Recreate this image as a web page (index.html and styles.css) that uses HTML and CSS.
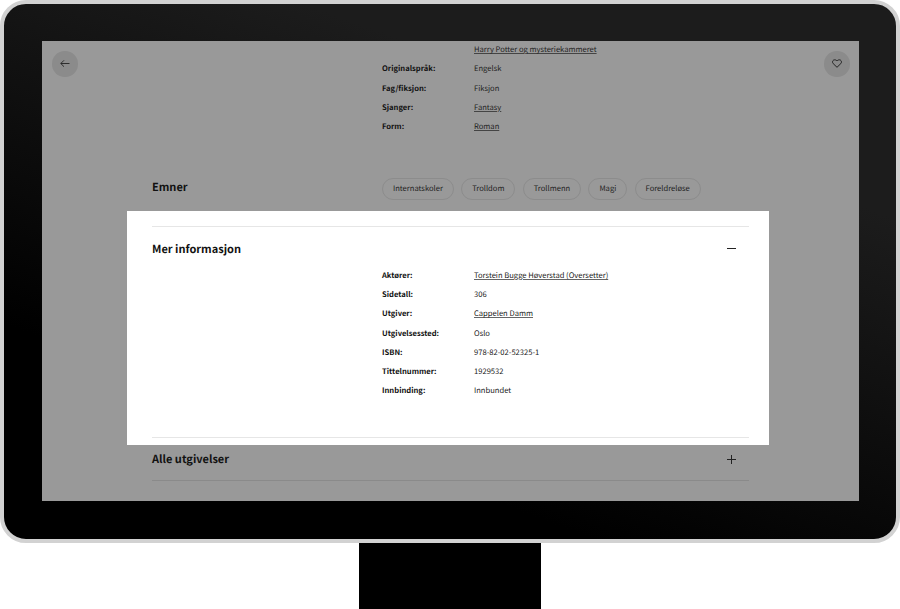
FILE: index.html
```html
<!DOCTYPE html>
<html lang="nb">
  <head>
    <meta charset="UTF-8" />
    <title>Mer informasjon</title>
    <link rel="stylesheet" href="styles.css">
  </head>
  <body>
    <div class="monitor">
      <div class="screen">
        <button class="round-btn back" aria-label="Tilbake">
          <svg width="10" height="9" viewBox="0 0 10 9"><path d="M9.500 4.500H.8M4 1.300.8 4.500 4 7.700" fill="none" stroke="#222" stroke-width=".9"/></svg>
        </button>
        <button class="round-btn fav" aria-label="Favoritt">
          <svg width="10" height="9" viewBox="0 0 10 9"><path d="M5 8.300 1.200 4.600C.1 3.500.4 1.800 1.600 1.100 2.800.5 4.200.9 5 2c.8-1.100 2.200-1.500 3.400-.9 1.200.7 1.500 2.400.4 3.500z" fill="none" stroke="#222" stroke-width="1"/></svg>
        </button>

        <div class="info dim top-info">
          <div class="row"><span class="label"></span><a class="value" href="#">Harry Potter og mysteriekammeret</a></div>
          <div class="row"><span class="label">Originalspråk:</span><span class="value">Engelsk</span></div>
          <div class="row"><span class="label">Fag/fiksjon:</span><span class="value">Fiksjon</span></div>
          <div class="row"><span class="label">Sjanger:</span><a class="value" href="#">Fantasy</a></div>
          <div class="row"><span class="label">Form:</span><a class="value" href="#">Roman</a></div>
        </div>

        <div class="topics">
          <h2 class="heading">Emner</h2>
          <div class="chips">
            <span class="chip">Internatskoler</span>
            <span class="chip">Trolldom</span>
            <span class="chip">Trollmenn</span>
            <span class="chip">Magi</span>
            <span class="chip">Foreldreløse</span>
          </div>
        </div>

        <div class="panel">
          <div class="panel-inner">
            <div class="section-head">
              <h2 class="heading">Mer informasjon</h2>
              <svg class="sign" width="9" height="9" viewBox="0 0 9 9"><path d="M0 4.500h9" stroke="#222" stroke-width="1"/></svg>
            </div>
            <div class="info">
              <div class="row"><span class="label">Aktører:</span><a class="value" href="#">Torstein Bugge Høverstad (Oversetter)</a></div>
              <div class="row"><span class="label">Sidetall:</span><span class="value">306</span></div>
              <div class="row"><span class="label">Utgiver:</span><a class="value" href="#">Cappelen Damm</a></div>
              <div class="row"><span class="label">Utgivelsessted:</span><span class="value">Oslo</span></div>
              <div class="row"><span class="label">ISBN:</span><span class="value">978-82-02-52325-1</span></div>
              <div class="row"><span class="label">Tittelnummer:</span><span class="value">1929532</span></div>
              <div class="row"><span class="label">Innbinding:</span><span class="value">Innbundet</span></div>
            </div>
          </div>
        </div>

        <div class="releases">
          <h2 class="heading">Alle utgivelser</h2>
          <svg class="sign" width="9" height="9" viewBox="0 0 9 9"><path d="M0 4.500h9M4.500 0v9" stroke="#222" stroke-width="1"/></svg>
        </div>
      </div>
    </div>
    <div class="stand"></div>
  </body>
</html>
```

FILE: styles.css
```css
* {
  padding: 0;
  margin: 0;
  box-sizing: border-box;
}
body {
  background: #fff;
  font-family: "Noto Sans CJK SC", "Noto Sans", sans-serif;
  text-rendering: geometricPrecision;
  color: #222;
  width: 900px;
  height: 609px;
  overflow: hidden;
}
.monitor {
  width: 900px;
  height: 543px;
  padding: 37px 37px 37px 38px;
  border: 4px solid #d2d2d2;
  border-radius: 26px;
  background: linear-gradient(20deg, #000 25%, #1c1c1c 75%);
}
.stand {
  width: 182px;
  height: 66px;
  margin-left: 359px;
  background: #000;
}
.screen {
  position: relative;
  height: 460px;
  background: #999;
  overflow: hidden;
}
.round-btn {
  position: absolute;
  top: 10px;
  width: 25.6px;
  height: 25.6px;
  border: none;
  border-radius: 50%;
  background: #8b8b8b;
  display: flex;
  align-items: center;
  justify-content: center;
}
.back {
  left: 10px;
}
.fav {
  right: 9.3px;
}
.info {
  margin-left: 230px;
}
.top-info {
  margin: -0.8px 0 0 340px;
}
.row {
  display: flex;
  height: 19.2px;
  align-items: center;
  font-size: 7.6px;
}
.label {
  width: 92px;
  font-weight: 700;
  color: #111;
}
.value {
  color: #222;
}
a.value {
  text-decoration: underline;
  text-decoration-color: #666;
}
.dim a.value {
  text-decoration-color: #444;
}
.topics {
  display: flex;
  align-items: center;
  margin: 41.8px 0 11px 110px;
  height: 22px;
}
.heading {
  font-size: 11px;
  font-weight: 700;
  color: #111;
}
.topics .heading {
  width: 230px;
  margin-bottom: 4px;
}
.chips {
  display: flex;
  gap: 7.3px;
}
.chip {
  height: 22px;
  padding: 0 10px;
  border: 1px solid #8c8c8c;
  border-radius: 11px;
  font-size: 7.6px;
  line-height: 20px;
  color: #222;
}
.panel {
  margin: 0 90px 0 85px;
  height: 234px;
  padding: 15px 20px 0 25px;
  background: #fff;
}
.panel-inner {
  height: 212px;
  border-top: 1px solid #e6e6e6;
  border-bottom: 1px solid #e6e6e6;
}
.section-head {
  display: flex;
  justify-content: space-between;
  align-items: center;
  height: 39px;
  padding: 6px 13px 1px 0;
}
.releases {
  display: flex;
  justify-content: space-between;
  align-items: center;
  height: 36px;
  margin: 0 110px;
  padding: 0 13px 6px 0;
  border-bottom: 1px solid #8a8a8a;
}
```
